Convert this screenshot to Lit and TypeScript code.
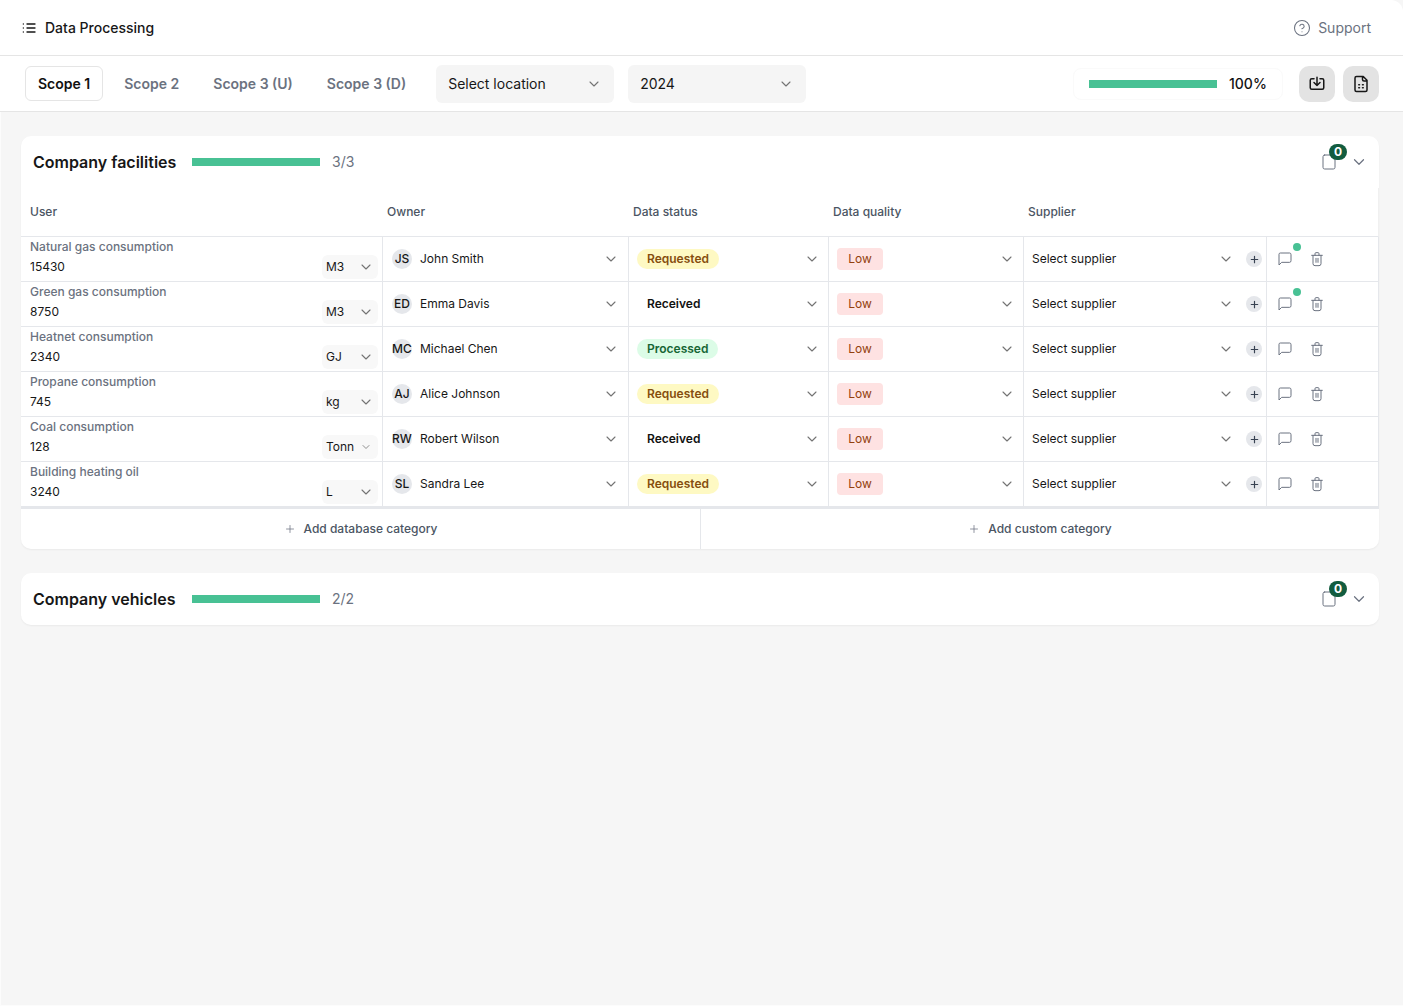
import { LitElement, css, html, svg } from 'lit';
import { customElement } from 'lit/decorators.js';
import { classMap } from 'lit/directives/class-map.js';

type Row = {
  label: string;
  value: string;
  unit: string;
  initials: string;
  owner: string;
  status: 'Requested' | 'Received' | 'Processed';
  note?: boolean;
};

const ROWS: Row[] = [
  { label: 'Natural gas consumption', value: '15430', unit: 'M3', initials: 'JS', owner: 'John Smith', status: 'Requested', note: true },
  { label: 'Green gas consumption', value: '8750', unit: 'M3', initials: 'ED', owner: 'Emma Davis', status: 'Received', note: true },
  { label: 'Heatnet consumption', value: '2340', unit: 'GJ', initials: 'MC', owner: 'Michael Chen', status: 'Processed' },
  { label: 'Propane consumption', value: '745', unit: 'kg', initials: 'AJ', owner: 'Alice Johnson', status: 'Requested' },
  { label: 'Coal consumption', value: '128', unit: 'Tonn', initials: 'RW', owner: 'Robert Wilson', status: 'Received' },
  { label: 'Building heating oil', value: '3240', unit: 'L', initials: 'SL', owner: 'Sandra Lee', status: 'Requested' },
];

const icon = (size: number, body: unknown, width = 2) => html`<svg
  class="icon"
  width=${size}
  height=${size}
  viewBox="0 0 24 24"
  fill="none"
  stroke="currentColor"
  stroke-width=${width}
  stroke-linecap="round"
  stroke-linejoin="round"
>${body}</svg>`;

const chevron = (size = 16) => icon(size, svg`<path d="m6 9 6 6 6-6" />`, 1.6);
const plus = (size: number, width = 2) => icon(size, svg`<path d="M5 12h14M12 5v14" />`, width);

@customElement('app-root')
export class AppRoot extends LitElement {
  static override styles = css`
    :host {
      display: block;
      min-height: 1006px;
      background: #f6f6f6;
      box-shadow: inset 1px 0 0 #fcfcfc, inset 0 -1px 0 #fcfcfc;
      font-family: Inter, 'Liberation Sans', sans-serif;
      color: #111;
    }
    .icon {
      display: block;
      flex: none;
    }
    .topbar {
      height: 55px;
      display: flex;
      align-items: center;
      padding: 0 32px 0 21px;
      background: #fff;
      border-bottom: 1px solid #e5e5e5;
      border-top-right-radius: 12px;
    }
    .crumb {
      display: flex;
      align-items: center;
      gap: 8px;
      font-size: 14px;
      font-weight: 500;
      color: #171717;
    }
    .support {
      margin-left: auto;
      display: flex;
      align-items: center;
      gap: 7px;
      font-size: 14px;
      color: #6b7280;
    }
    .toolbar {
      height: 55px;
      display: flex;
      align-items: center;
      padding: 0 24px 0 25px;
      background: #fff;
      border-bottom: 1px solid #e5e5e5;
    }
    .tabs {
      display: flex;
      gap: 8px;
      margin-right: 17px;
    }
    .tab {
      height: 33px;
      display: flex;
      align-items: center;
      padding: 0 12px;
      border: 1px solid transparent;
      border-radius: 6px;
      font-size: 14px;
      font-weight: 600;
      color: #6b7280;
    }
    .tab.active {
      border-color: #e5e5e5;
      color: #111;
    }
    .select {
      width: 178px;
      height: 38px;
      box-sizing: border-box;
      display: flex;
      align-items: center;
      justify-content: space-between;
      padding: 0 12px;
      margin-right: 14px;
      background: #f5f5f5;
      border-radius: 6px;
      font-size: 14px;
      color: #171717;
    }
    .select .icon {
      color: #737373;
    }
    .overall {
      margin-left: auto;
      width: 210px;
      height: 32px;
      box-sizing: border-box;
      display: flex;
      align-items: center;
      gap: 12px;
      padding: 0 15px;
      border: 1px solid #fafafa;
      border-radius: 8px;
      font-size: 14px;
      font-weight: 500;
    }
    .bar {
      width: 128px;
      height: 8px;
      flex: none;
      background: #48c194;
    }
    .square {
      width: 36px;
      height: 36px;
      margin-left: 16px;
      display: flex;
      align-items: center;
      justify-content: center;
      background: #e3e3e3;
      border-radius: 10px;
      color: #171717;
    }
    .square + .square {
      margin-left: 8px;
    }
    main {
      padding: 24px 24px 0 21px;
      display: flex;
      flex-direction: column;
      gap: 24px;
    }
    .card {
      background: #fff;
      border-radius: 10px;
      box-shadow: 0 1px 2px rgba(0, 0, 0, 0.05);
    }
    .card-head {
      height: 52px;
      display: flex;
      align-items: center;
      padding: 0 11px 0 12px;
    }
    .card-title {
      width: 159px;
      font-size: 16px;
      font-weight: 600;
      color: #171717;
    }
    .count {
      margin-left: 12px;
      font-size: 14px;
      line-height: 16px;
      color: #6b7280;
    }
    .card-tools {
      margin-left: auto;
      display: flex;
      align-items: center;
      gap: 13px;
      color: #6b7280;
    }
    .clip {
      position: relative;
      width: 16px;
      height: 16px;
    }
    .badge {
      position: absolute;
      left: 8px;
      top: -10px;
      width: 18px;
      height: 16px;
      border-radius: 8px;
      background: #125c3f;
      color: #fff;
      font-size: 12px;
      font-weight: 700;
      line-height: 16px;
      text-align: center;
    }
    .table {
      display: grid;
      grid-template-columns: 362px 246px 200px 195px 243px 112px;
      font-size: 12px;
      line-height: 14px;
    }
    .th {
      height: 49px;
      display: flex;
      align-items: center;
      padding: 0 0 0 4px;
      box-sizing: border-box;
      border-bottom: 1px solid #e5e7eb;
      color: #4b5563;
      font-weight: 500;
    }
    .th.user {
      padding-left: 9px;
    }
    .th.end {
      border-right: 1px solid #f0f0f0;
    }
    .td {
      height: 45px;
      box-sizing: border-box;
      display: flex;
      align-items: center;
      justify-content: space-between;
      padding: 0 8px;
      border-right: 1px solid #e5e7eb;
      border-bottom: 1px solid #e5e7eb;
      color: #171717;
    }
    .td .chev {
      color: #737373;
    }
    .td.owner .chev {
      margin-right: 1px;
    }
    .td.supplier {
      padding-right: 4px;
    }
    .td.last-row {
      height: 47px;
      border-bottom-width: 3px;
    }
    .measure {
      display: grid;
      grid-template-columns: 1fr auto;
      grid-template-rows: 18px 26px;
      padding: 0 4px 0 9px;
      align-items: start;
    }
    .measure .name {
      grid-column: 1 / 3;
      color: #6b7280;
      font-weight: 500;
      line-height: 20px;
    }
    .measure .value {
      line-height: 24px;
    }
    .unit {
      width: 56px;
      height: 24px;
      box-sizing: border-box;
      display: flex;
      align-items: center;
      justify-content: space-between;
      padding: 0 4px;
      background: #f8f8f8;
      border-radius: 6px;
    }
    .unit .icon {
      color: #737373;
    }
    .unit.wide .icon {
      width: 12px;
      height: 12px;
      margin-right: 2px;
    }
    .person {
      display: flex;
      align-items: center;
      gap: 8px;
      padding-left: 1px;
    }
    .avatar {
      width: 20px;
      height: 20px;
      display: flex;
      align-items: center;
      justify-content: center;
      border-radius: 50%;
      background: #e5e7eb;
      font-weight: 500;
      white-space: nowrap;
    }
    .pill {
      height: 20px;
      display: flex;
      align-items: center;
      padding: 0 10px;
      border-radius: 10px;
      font-weight: 600;
    }
    .pill.Requested {
      background: #fef9c3;
      color: #854d0e;
    }
    .pill.Received {
      color: #111;
    }
    .pill.Processed {
      background: #dcfce7;
      color: #166534;
    }
    .low {
      width: 46px;
      height: 22px;
      display: flex;
      align-items: center;
      justify-content: center;
      border-radius: 4px;
      background: #fee2e2;
      color: #92400e;
    }
    .supplier-end {
      display: flex;
      align-items: center;
      gap: 12px;
    }
    .add {
      width: 16px;
      height: 16px;
      display: flex;
      align-items: center;
      justify-content: center;
      border-radius: 50%;
      background: #e5e7eb;
      color: #374151;
    }
    .actions {
      justify-content: flex-start;
      gap: 16px;
      padding-left: 10px;
      color: #6b7280;
    }
    .note {
      position: relative;
    }
    .dot {
      position: absolute;
      left: 16px;
      top: -8px;
      width: 8px;
      height: 8px;
      border-radius: 50%;
      background: #48c194;
    }
    .foot {
      height: 40px;
      display: grid;
      grid-template-columns: 679px 1fr;
      line-height: 14px;
    }
    .foot div {
      display: flex;
      align-items: center;
      justify-content: center;
      gap: 8px;
      font-size: 12px;
      font-weight: 500;
      color: #4b5563;
    }
    .foot div + div {
      border-left: 1px solid #e5e7eb;
    }
    .foot .icon {
      color: #6b7280;
    }
  `;

  private cardHead(title: string, count: string) {
    return html`<div class="card-head">
      <div class="card-title">${title}</div>
      <div class="bar"></div>
      <div class="count">${count}</div>
      <div class="card-tools">
        <div class="clip">
          ${icon(16, svg`<rect x="3" y="1.5" width="18" height="21" rx="2.5" />`, 1.5)}
          <span class="badge">0</span>
        </div>
        ${chevron(18)}
      </div>
    </div>`;
  }

  private row(row: Row, last: boolean) {
    const cls = { td: true, 'last-row': last };
    return html`
      <div class=${classMap({ ...cls, measure: true })}>
        <div class="name">${row.label}</div>
        <div class="value">${row.value}</div>
        <div class=${classMap({ unit: true, wide: row.unit === 'Tonn' })}>${row.unit}${chevron()}</div>
      </div>
      <div class=${classMap({ ...cls, owner: true })}>
        <div class="person"><span class="avatar">${row.initials}</span>${row.owner}</div>
        <span class="chev">${chevron()}</span>
      </div>
      <div class=${classMap(cls)}>
        <span class="pill ${row.status}">${row.status}</span>
        <span class="chev">${chevron()}</span>
      </div>
      <div class=${classMap(cls)}>
        <span class="low">Low</span>
        <span class="chev">${chevron()}</span>
      </div>
      <div class=${classMap({ ...cls, supplier: true })}>
        <span>Select supplier</span>
        <div class="supplier-end">
          <span class="chev">${chevron()}</span>
          <span class="add">${plus(11, 2.6)}</span>
        </div>
      </div>
      <div class=${classMap({ ...cls, actions: true })}>
        <span class="note">
          ${icon(16, svg`<path d="M21 15a2 2 0 0 1-2 2H7l-4 4V5a2 2 0 0 1 2-2h14a2 2 0 0 1 2 2z" />`, 1.5)}
          ${row.note ? html`<span class="dot"></span>` : ''}
        </span>
        ${icon(16, svg`<path d="M4 6.5h16M6 6.5V19a3 3 0 0 0 3 3h6a3 3 0 0 0 3-3V6.5M9 6.5V4a1.5 1.5 0 0 1 1.5-1.5h3A1.5 1.5 0 0 1 15 4v2.5M10.5 11v6M13.5 11v6" />`, 1.5)}
      </div>
    `;
  }

  override render() {
    return html`
      <header class="topbar">
        <div class="crumb">
          ${icon(16, svg`<path d="M9 6h12M9 12h12M9 18h12M3.5 6h.01M3.5 12h.01M3.5 18h.01" />`, 2)}
          Data Processing
        </div>
        <div class="support">
          ${icon(18, svg`<circle cx="12" cy="12" r="10" /><path d="M9.1 9a3 3 0 0 1 5.8 1c0 2-3 3-3 3M12 17h.01" />`, 1.4)}
          Support
        </div>
      </header>
      <div class="toolbar">
        <div class="tabs">
          <div class="tab active">Scope 1</div>
          <div class="tab">Scope 2</div>
          <div class="tab">Scope 3 (U)</div>
          <div class="tab">Scope 3 (D)</div>
        </div>
        <div class="select">Select location ${chevron()}</div>
        <div class="select">2024 ${chevron()}</div>
        <div class="overall"><div class="bar"></div>100%</div>
        <div class="square">
          ${icon(18, svg`<path d="M8 5H5a2 2 0 0 0-2 2v10a2 2 0 0 0 2 2h14a2 2 0 0 0 2-2V7a2 2 0 0 0-2-2h-3M12 3v11M8 10l4 4 4-4" />`, 2)}
        </div>
        <div class="square">
          ${icon(18, svg`<path d="M15 2H6a2 2 0 0 0-2 2v16a2 2 0 0 0 2 2h12a2 2 0 0 0 2-2V7zM14 2v4a2 2 0 0 0 2 2h4M9 13h1M14 13h1M9 17h1M14 17h1" />`, 2)}
        </div>
      </div>
      <main>
        <section class="card">
          ${this.cardHead('Company facilities', '3/3')}
          <div class="table">
            <div class="th user">User</div>
            <div class="th">Owner</div>
            <div class="th">Data status</div>
            <div class="th">Data quality</div>
            <div class="th">Supplier</div>
            <div class="th end"></div>
            ${ROWS.map((r, i) => this.row(r, i === ROWS.length - 1))}
          </div>
          <div class="foot">
            <div>${plus(12, 1.5)} Add database category</div>
            <div>${plus(12, 1.5)} Add custom category</div>
          </div>
        </section>
        <section class="card">${this.cardHead('Company vehicles', '2/2')}</section>
      </main>
    `;
  }
}
